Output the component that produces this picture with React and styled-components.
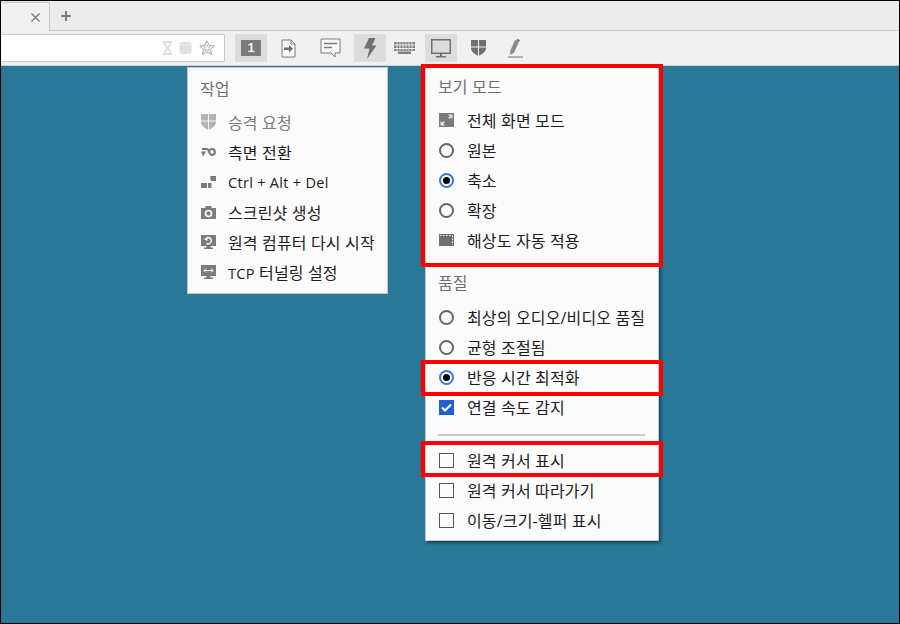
import React from 'react';
import styled, { createGlobalStyle } from 'styled-components';

const GlobalStyle = createGlobalStyle`
  html, body {
    margin: 0;
    padding: 0;
    background: #2a7897;
  }
  body {
    font-family: 'Open Sans', 'Noto Sans CJK KR', sans-serif;
  }
`;

const Frame = styled.div`
  width: 900px;
  height: 624px;
  box-sizing: border-box;
  border: 1px solid #000;
  display: flex;
  flex-direction: column;
  overflow: hidden;
`;

const TabBar = styled.div`
  height: 30px;
  flex: none;
  box-sizing: border-box;
  background: #ebebeb;
  border-bottom: 1px solid #c8c8c8;
  display: flex;
  padding-top: 1px;
`;

const Tab = styled.div`
  width: 49px;
  height: 29px;
  box-sizing: border-box;
  background: #f1f1f1;
  border-top: 1px solid #c8c8c8;
  border-right: 1px solid #c8c8c8;
  display: flex;
  align-items: center;
  justify-content: flex-end;
  padding-right: 9px;
`;

const NewTab = styled.div`
  margin-left: 11px;
  height: 28px;
  display: flex;
  align-items: center;
`;

const Toolbar = styled.div`
  height: 35px;
  flex: none;
  box-sizing: border-box;
  background: #f1f1f1;
  border-bottom: 1px solid #cfcfcf;
  display: flex;
  align-items: flex-start;
  padding-top: 3px;
`;

const AddressBar = styled.div`
  width: 224px;
  height: 28px;
  box-sizing: border-box;
  background: #fff;
  border: 1px solid #c8c8c8;
  border-left: 0;
  display: flex;
  align-items: center;
  justify-content: flex-end;
  gap: 7px;
  padding-right: 9px;
`;

const ToolButton = styled.div`
  width: 32px;
  height: 28px;
  flex: none;
  margin-left: ${(props) => props.$gap}px;
  background: ${(props) => (props.$active ? '#dcdcdc' : 'transparent')};
  display: flex;
  align-items: center;
  justify-content: center;
`;

const NumberBadge = styled.span`
  width: 20px;
  height: 16px;
  background: #7b7b7b;
  color: #f1f1f1;
  font-family: 'Liberation Sans', sans-serif;
  font-size: 13px;
  font-weight: 700;
  line-height: 16px;
  text-align: center;
`;

const Desktop = styled.div`
  flex: 1;
  position: relative;
  background: #2a7897;
`;

const Menu = styled.div`
  position: absolute;
  top: ${(props) => props.$top}px;
  left: ${(props) => props.$left}px;
  width: ${(props) => props.$width}px;
  box-sizing: border-box;
  background: #fbfbfb;
  border: 1px solid #c6c6c6;
  box-shadow: ${(props) => (props.$shadow ? '2px 2px 3px rgba(0, 0, 0, 0.45)' : 'none')};
  padding: ${(props) => props.$padding};
`;

const Title = styled.div`
  height: 28px;
  line-height: 28px;
  margin: ${(props) => props.$margin || '0 0 4px'};
  padding-left: 12px;
  font-size: 16px;
  letter-spacing: 0.15px;
  color: #6f6f6f;
`;

const Item = styled.div`
  height: 30px;
  display: flex;
  align-items: center;
  gap: ${(props) => props.$gap || 13}px;
  padding-left: 13px;
  font-size: 16px;
  letter-spacing: 0.15px;
  white-space: nowrap;
  color: ${(props) => (props.$disabled ? '#7c7c7c' : '#1c1c1c')};
`;

const ItemLabel = styled.span`
  display: block;
`;

const Latin = styled.span`
  font-size: 14.5px;
  letter-spacing: 0.3px;
`;

const IconBox = styled.span`
  width: 15px;
  height: 16px;
  flex: none;
  display: flex;
  align-items: center;
  justify-content: center;
`;

const Radio = styled.span`
  width: 15px;
  height: 15px;
  flex: none;
  box-sizing: border-box;
  border-radius: 50%;
  border: 2px solid ${(props) => (props.$checked ? '#3a76de' : '#666')};
  background: #fbfbfb;
  display: flex;
  align-items: center;
  justify-content: center;
  &::after {
    content: '';
    display: ${(props) => (props.$checked ? 'block' : 'none')};
    width: 7px;
    height: 7px;
    border-radius: 50%;
    background: #000;
  }
`;

const CheckBox = styled.span`
  width: 15px;
  height: 15px;
  flex: none;
  box-sizing: border-box;
  border: 1px solid ${(props) => (props.$checked ? '#1f5fd2' : '#555')};
  background: ${(props) => (props.$checked ? '#1f5fd2' : '#fbfbfb')};
  display: flex;
  align-items: center;
  justify-content: center;
`;

const Divider = styled.div`
  height: 2px;
  margin: 12px 13px 9px 12px;
  background: #cccccc;
`;

const Marked = styled.div`
  position: relative;
  &::after {
    content: '';
    position: absolute;
    top: ${(props) => props.$top}px;
    bottom: ${(props) => props.$bottom}px;
    left: -5px;
    right: -5px;
    border: 4px solid #ff0000;
    pointer-events: none;
  }
`;

const Hourglass = () => (
  <svg width="9" height="14" viewBox="0 0 9 14">
    <path d="M0 1h9M0 13h9M1.500 1v2l3 4 3-4V1M1.500 13v-2l3-4 3 4v2" fill="none" stroke="#dcdcdc" strokeWidth="1.800" />
  </svg>
);

const Cylinder = () => (
  <svg width="13" height="14" viewBox="0 0 13 14">
    <path d="M0.500 2.500C0.500 0.500 12.500 0.500 12.500 2.500V11.500C12.500 13.500 0.500 13.500 0.500 11.500Z" fill="#dedede" />
    <path d="M1 3c2 1.400 9 1.400 11 0" fill="none" stroke="#f4f4f4" />
  </svg>
);

const Star = () => (
  <svg width="16" height="16" viewBox="0 0 16 16">
    <path d="M8 0.800l2.200 4.600 5 .6-3.700 3.400 1 5L8 12l-4.500 2.400 1-5L.8 6l5-.6z" fill="none" stroke="#a2a2a2" />
    <path d="M8 4.500l1 2.300 2.400.3-1.800 1.600.5 2.400L8 9.900l-2.100 1.200.5-2.400-1.800-1.600 2.400-.3z" fill="none" stroke="#bdbdbd" />
  </svg>
);

const DocArrow = () => (
  <svg width="15" height="19" viewBox="0 0 15 19">
    <path d="M1 1h9l4 4v13H1z" fill="#f8f8f8" stroke="#7b7b7b" />
    <path d="M10 1v4h4" fill="none" stroke="#7b7b7b" />
    <path d="M3 8.500h5V6l4 3.800-4 3.800V11H3z" fill="#6f6f6f" />
  </svg>
);

const Comment = () => (
  <svg width="21" height="20" viewBox="0 0 21 20">
    <path d="M1 1h19v14h-5v4l-4-4H1z" fill="#f8f8f8" stroke="#7b7b7b" />
    <path d="M4 5.500h13M4 9.500h8" stroke="#7b7b7b" strokeWidth="1.500" />
  </svg>
);

const Bolt = () => (
  <svg width="14" height="21" viewBox="0 0 14 21">
    <path d="M6 0h6.500L9 7.500h4.500L4 21l2.500-10.500H1z" fill="#707070" />
  </svg>
);

const Keyboard = () => (
  <svg width="21" height="12" viewBox="0 0 21 12">
    <path d="M0 0h21v2.500H0zM0 3.500h21V6H0zM0 7h21v2H0zM4 9.500h13V12H4z" fill="#808080" />
    <path d="M3 0v9M6 0v9M9 0v9M12 0v9M15 0v9M18 0v9" stroke="#f1f1f1" strokeWidth="0.800" />
  </svg>
);

const Monitor = () => (
  <svg width="20" height="19" viewBox="0 0 20 19">
    <rect x="0.750" y="0.750" width="18.500" height="13.500" fill="none" stroke="#707070" strokeWidth="1.500" />
    <path d="M9 15h2v2H9zM5 17h10v1.500H5z" fill="#707070" />
  </svg>
);

const Shield = ({ size = 15, color = '#707070' }) => (
  <svg width={size} height={size + 1} viewBox="0 0 15 16">
    <path d="M0 0h15v8c0 4-4 6-7.500 8C4 14 0 12 0 8z" fill={color} />
    <path d="M7.500 0v16M0 7h15" stroke="#f4f4f4" strokeWidth="1" />
  </svg>
);

const Pen = () => (
  <svg width="16" height="19" viewBox="0 0 16 19">
    <path d="M7 1l4 1.500L6 14l-4 1.500.3-4z" fill="#8c8c8c" />
    <path d="M9 0l3 1-.8 1.500-3-1z" fill="#6f6f6f" />
    <path d="M0 18h15" stroke="#707070" strokeWidth="1" />
  </svg>
);

const CloseIcon = () => (
  <svg width="9" height="9" viewBox="0 0 9 9">
    <path d="M0.500 0.500l8 8M8.500 0.500l-8 8" stroke="#7a7a7a" strokeWidth="1.300" />
  </svg>
);

const PlusIcon = () => (
  <svg width="10" height="10" viewBox="0 0 10 10">
    <path d="M5 0v10M0 5h10" stroke="#7a7a7a" strokeWidth="2" />
  </svg>
);

const SwapIcon = () => (
  <svg width="15" height="10" viewBox="0 0 15 10">
    <path
      d="M1 2h5c2 0 2 6 5 6 1.800 0 2.800-1.300 2.800-3S12.800 2 11 2C9.800 2 9 2.800 8.500 3.800"
      fill="none"
      stroke="#7b7b7b"
      strokeWidth="2.200"
    />
    <path d="M0 4.500h5L2 9.500z" fill="#7b7b7b" />
  </svg>
);

const KeysIcon = () => (
  <svg width="15" height="12" viewBox="0 0 15 12">
    <path d="M0 7h6v5H0zM7 7h3.500v5H7zM9.500 0H15v5H9.500z" fill="#7b7b7b" />
  </svg>
);

const CameraIcon = () => (
  <svg width="15" height="13" viewBox="0 0 15 13">
    <path d="M0 2h4l1-2h5l1 2h4v11H0z" fill="#7b7b7b" />
    <circle cx="7.500" cy="7.500" r="3" fill="none" stroke="#fbfbfb" strokeWidth="1.700" />
  </svg>
);

const RestartIcon = () => (
  <svg width="15" height="14" viewBox="0 0 15 14">
    <path d="M0 0h15v11H9.500v1.500H12V14H3v-1.500h2.500V11H0z" fill="#7b7b7b" />
    <path d="M6 2.700A3.200 3.200 0 1 1 5.400 8.400" fill="none" stroke="#fbfbfb" strokeWidth="1.400" />
    <path d="M3 4.500L6.500 1.500V6z" fill="#fbfbfb" />
  </svg>
);

const TunnelIcon = () => (
  <svg width="15" height="14" viewBox="0 0 15 14">
    <path d="M0 0h15v11H9.500v1.500H12V14H3v-1.500h2.500V11H0z" fill="#7b7b7b" />
    <path d="M3 5.500h9M3 5.500l2-2M3 5.500l2 2M12 5.500l-2-2M12 5.500l-2 2" fill="none" stroke="#fbfbfb" />
  </svg>
);

const FullScreenIcon = () => (
  <svg width="15" height="14" viewBox="0 0 15 14">
    <rect width="15" height="14" fill="#7b7b7b" />
    <path d="M9 1.500h4.500V6L12 4.500 10.500 6 9.200 4.700l1.500-1.500zM6 12.500H1.500V8L3 9.500 4.500 8l1.300 1.300-1.500 1.500z" fill="#e2e2e2" />
  </svg>
);

const AutoFitIcon = () => (
  <svg width="15" height="12" viewBox="0 0 15 12">
    <rect width="15" height="12" fill="#707070" />
    <path d="M13.500 1.500V11M1 1.500h12.500" fill="none" stroke="#fbfbfb" strokeDasharray="1.500 1.500" />
  </svg>
);

const CheckMark = () => (
  <svg width="11" height="9" viewBox="0 0 11 9">
    <path d="M1 4.500l3 3 6-6" fill="none" stroke="#fff" strokeWidth="2" />
  </svg>
);

const actions = [
  { label: '승격 요청', icon: <Shield size={15} color="#b4b4b4" />, disabled: true },
  { label: '측면 전환', icon: <SwapIcon /> },
  { label: <Latin>Ctrl + Alt + Del</Latin>, icon: <KeysIcon /> },
  { label: '스크린샷 생성', icon: <CameraIcon /> },
  { label: '원격 컴퓨터 다시 시작', icon: <RestartIcon /> },
  { label: <><Latin>TCP</Latin> 터널링 설정</>, icon: <TunnelIcon /> },
];

const Row = ({ icon, children }) => (
  <Item>
    <IconBox>{icon}</IconBox>
    <ItemLabel>{children}</ItemLabel>
  </Item>
);

const App = () => (
  <>
    <GlobalStyle />
    <Frame>
      <TabBar>
        <Tab>
          <CloseIcon />
        </Tab>
        <NewTab>
          <PlusIcon />
        </NewTab>
      </TabBar>
      <Toolbar>
        <AddressBar>
          <Hourglass />
          <Cylinder />
          <Star />
        </AddressBar>
        <ToolButton $gap={10} $active>
          <NumberBadge>1</NumberBadge>
        </ToolButton>
        <ToolButton $gap={5}>
          <DocArrow />
        </ToolButton>
        <ToolButton $gap={10}>
          <Comment />
        </ToolButton>
        <ToolButton $gap={8} $active>
          <Bolt />
        </ToolButton>
        <ToolButton $gap={2}>
          <Keyboard />
        </ToolButton>
        <ToolButton $gap={5} $active>
          <Monitor />
        </ToolButton>
        <ToolButton $gap={5}>
          <Shield />
        </ToolButton>
        <ToolButton $gap={6}>
          <Pen />
        </ToolButton>
      </Toolbar>
      <Desktop>
        <Menu $top={1} $left={186} $width={201} $padding="7px 0 6px">
          <Title>작업</Title>
          {actions.map((action, index) => (
            <Item key={index} $gap={12} $disabled={action.disabled}>
              <IconBox>{action.icon}</IconBox>
              <ItemLabel>{action.label}</ItemLabel>
            </Item>
          ))}
        </Menu>
        <Menu $top={1} $left={424} $width={234} $shadow $padding="5px 0 5px">
          <Marked $top={-9} $bottom={-12}>
            <Title>보기 모드</Title>
            <Row icon={<FullScreenIcon />}>전체 화면 모드</Row>
            <Row icon={<Radio />}>원본</Row>
            <Row icon={<Radio $checked />}>축소</Row>
            <Row icon={<Radio />}>확장</Row>
            <Row icon={<AutoFitIcon />}>해상도 자동 적용</Row>
          </Marked>
          <Title $margin="14px 0 5px">품질</Title>
          <Row icon={<Radio />}>최상의 오디오/비디오 품질</Row>
          <Row icon={<Radio />}>균형 조절됨</Row>
          <Marked $top={-2} $bottom={-4}>
            <Row icon={<Radio $checked />}>반응 시간 최적화</Row>
          </Marked>
          <Row icon={<CheckBox $checked><CheckMark /></CheckBox>}>연결 속도 감지</Row>
          <Divider />
          <Marked $top={-4} $bottom={-2}>
            <Row icon={<CheckBox />}>원격 커서 표시</Row>
          </Marked>
          <Row icon={<CheckBox />}>원격 커서 따라가기</Row>
          <Row icon={<CheckBox />}>이동/크기-헬퍼 표시</Row>
        </Menu>
      </Desktop>
    </Frame>
  </>
);

export default App;
